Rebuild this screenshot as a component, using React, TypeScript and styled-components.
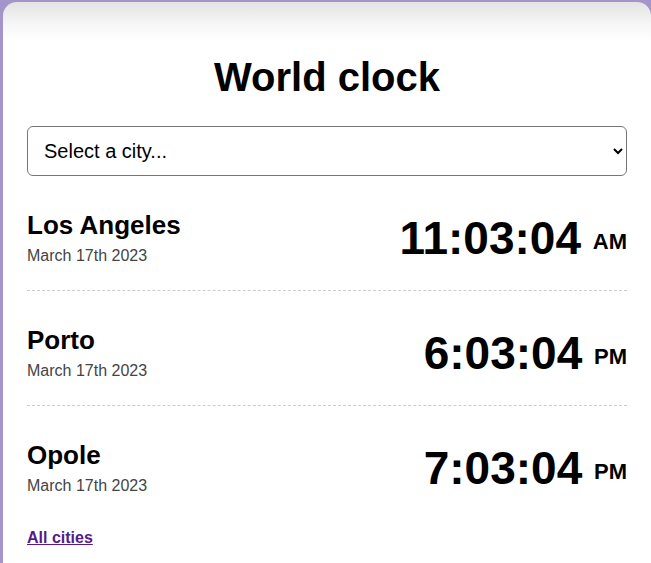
import React from "react";
import styled, { createGlobalStyle } from "styled-components";

const Global = createGlobalStyle`
  html, body {
    margin: 0;
    padding: 0;
    background: #a395c9;
    overflow: hidden;
    font-family: "Liberation Sans", Arial, sans-serif;
  }
`;

const Card = styled.main`
  box-sizing: border-box;
  margin: 2px 0 0 3px;
  width: 648px;
  min-height: 600px;
  padding: 52px 24px 40px;
  border-radius: 14px 14px 0 0;
  background: linear-gradient(to bottom, #e3e3e3 0px, #f6f6f6 22px, #ffffff 40px);
`;

const Title = styled.h1`
  margin: 0 0 26px;
  font-size: 40px;
  font-weight: 700;
  line-height: 46px;
  text-align: center;
  color: #000;
`;

const CitySelect = styled.select`
  display: block;
  box-sizing: border-box;
  width: 100%;
  height: 50px;
  padding: 0 10px 0 12px;
  border: 1px solid #767676;
  border-radius: 6px;
  background: #fff;
  font-family: "Liberation Sans", Arial, sans-serif;
  font-size: 20px;
  color: #000;
`;

const Row = styled.div<{ $last?: boolean }>`
  display: flex;
  align-items: center;
  justify-content: space-between;
  padding: 34px 0 25px;
  border-bottom: ${(p) => (p.$last ? "none" : "1px dashed #cccccc")};
`;

const CityInfo = styled.div`
  display: flex;
  flex-direction: column;
`;

const CityName = styled.h2`
  margin: 0 0 6px;
  font-size: 26px;
  font-weight: 700;
  line-height: 30px;
  color: #000;
`;

const CityDate = styled.div`
  font-size: 16px;
  line-height: 19px;
  color: #444;
`;

const Time = styled.div`
  font-size: 46px;
  font-weight: 700;
  line-height: 1;
  color: #000;
  white-space: nowrap;
`;

const Meridiem = styled.span`
  margin-left: -1px;
  font-size: 22px;
  vertical-align: 5px;
`;

const AllLink = styled.a`
  display: inline-block;
  margin-top: 9px;
  font-size: 16px;
  font-weight: 700;
  color: #551a8b;
  text-decoration: underline;
`;

const cities = [
  { name: "Los Angeles", date: "March 17th 2023", time: "11:03:04", mer: "AM" },
  { name: "Porto", date: "March 17th 2023", time: "6:03:04", mer: "PM" },
  { name: "Opole", date: "March 17th 2023", time: "7:03:04", mer: "PM" },
];

export default function App() {
  return (
    <>
      <Global />
      <Card>
        <Title>World clock</Title>
        <CitySelect defaultValue="">
          <option value="">Select a city...</option>
          <option value="current">My current location</option>
          <option value="tokyo">Tokyo</option>
          <option value="paris">Paris</option>
        </CitySelect>
        {cities.map((c, i) => (
          <Row key={c.name} $last={i === cities.length - 1}>
            <CityInfo>
              <CityName>{c.name}</CityName>
              <CityDate>{c.date}</CityDate>
            </CityInfo>
            <Time>
              {c.time} <Meridiem>{c.mer}</Meridiem>
            </Time>
          </Row>
        ))}
        <AllLink href="#">All cities</AllLink>
      </Card>
    </>
  );
}
